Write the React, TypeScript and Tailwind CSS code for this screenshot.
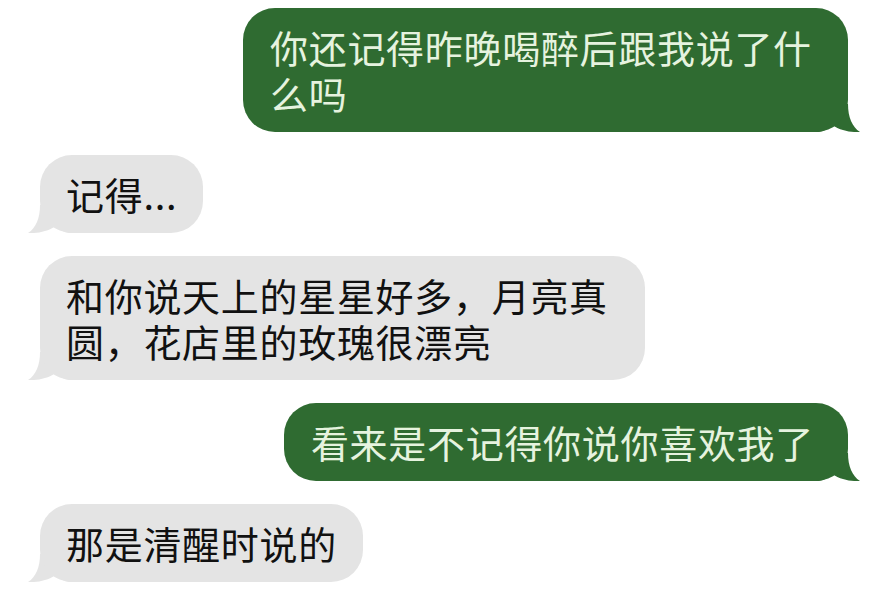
import React from "react";

type Msg = { side: "me" | "them"; text: string; wide?: boolean };

const messages: Msg[] = [
  { side: "me", text: "你还记得昨晚喝醉后跟我说了什么吗", wide: true },
  { side: "them", text: "记得..." },
  { side: "them", text: "和你说天上的星星好多，月亮真圆，花店里的玫瑰很漂亮", wide: true },
  { side: "me", text: "看来是不记得你说你喜欢我了" },
  { side: "them", text: "那是清醒时说的" },
];

// bubble tail, drawn for the right side; mirrored for the left
const Tail = ({ color, left }: { color: string; left?: boolean }) => (
  <svg
    width="45"
    height="28"
    viewBox="0 0 45 28"
    className={
      left
        ? "absolute bottom-0 left-[-12px] -scale-x-100"
        : "absolute bottom-0 right-[-12px]"
    }
  >
    <path
      d="M0 0 H33 C33 13 37 23 45 28 C37 28.5 26 27 17 21 C13 24 10 27 4 28 H0 Z"
      fill={color}
    />
  </svg>
);

const Bubble = ({ msg }: { msg: Msg }) => {
  const me = msg.side === "me";
  return (
    <div
      className={`relative ${me ? "self-end mr-[35px]" : "self-start ml-[40px]"} ${
        msg.wide ? "w-[605px]" : ""
      }`}
    >
      <Tail color={me ? "#2f6b31" : "#e4e4e4"} left={!me} />
      <div
        className={`relative rounded-[32px] py-[16px] text-[38px] leading-[46px] tracking-[0.7px] ${
          me
            ? "bg-[#2f6b31] text-[#e6f3df] pl-[27px] pr-[34px]"
            : "bg-[#e4e4e4] text-[#111111] px-[26px]"
        }`}
      >
        {msg.text}
      </div>
    </div>
  );
};

export default function App() {
  return (
    <div
      className="w-[883px] h-[600px] overflow-hidden bg-white flex flex-col gap-[23px] pt-[8px]"
      style={{ fontFamily: '"Noto Sans CJK SC", "Noto Sans", sans-serif' }}
    >
      {messages.map((m, i) => (
        <Bubble key={i} msg={m} />
      ))}
    </div>
  );
}
